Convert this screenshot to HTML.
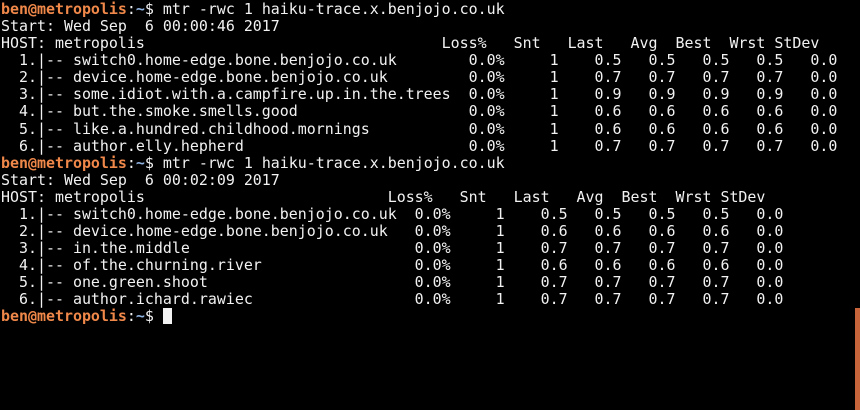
<!DOCTYPE html>
<html><head><meta charset="utf-8"><style>
html,body{margin:0;padding:0;background:#000;width:860px;height:410px;overflow:hidden;position:relative}
pre{margin:0;position:absolute;left:1px;top:1px;font-family:"DejaVu Sans Mono","Liberation Mono",monospace;font-size:14.95px;line-height:17.08px;color:#f2f2f2}
.p{color:#f0884a;font-weight:bold}
.t{color:#8fb3e0;font-weight:bold}
.c{display:inline-block;width:9px;height:16px;background:#f2f2f2;vertical-align:-3px}
.bar{position:absolute;left:855px;top:308px;width:5px;height:102px;background:#c8643a}
</style></head><body>
<pre><span class="p">ben@metropolis</span>:<span class="t">~</span>$ mtr -rwc 1 haiku-trace.x.benjojo.co.uk
Start: Wed Sep  6 00:00:46 2017
HOST: metropolis                                 Loss%   Snt   Last   Avg  Best  Wrst StDev
  1.|-- switch0.home-edge.bone.benjojo.co.uk        0.0%     1    0.5   0.5   0.5   0.5   0.0
  2.|-- device.home-edge.bone.benjojo.co.uk         0.0%     1    0.7   0.7   0.7   0.7   0.0
  3.|-- some.idiot.with.a.campfire.up.in.the.trees  0.0%     1    0.9   0.9   0.9   0.9   0.0
  4.|-- but.the.smoke.smells.good                   0.0%     1    0.6   0.6   0.6   0.6   0.0
  5.|-- like.a.hundred.childhood.mornings           0.0%     1    0.6   0.6   0.6   0.6   0.0
  6.|-- author.elly.hepherd                         0.0%     1    0.7   0.7   0.7   0.7   0.0
<span class="p">ben@metropolis</span>:<span class="t">~</span>$ mtr -rwc 1 haiku-trace.x.benjojo.co.uk
Start: Wed Sep  6 00:02:09 2017
HOST: metropolis                           Loss%   Snt   Last   Avg  Best  Wrst StDev
  1.|-- switch0.home-edge.bone.benjojo.co.uk  0.0%     1    0.5   0.5   0.5   0.5   0.0
  2.|-- device.home-edge.bone.benjojo.co.uk   0.0%     1    0.6   0.6   0.6   0.6   0.0
  3.|-- in.the.middle                         0.0%     1    0.7   0.7   0.7   0.7   0.0
  4.|-- of.the.churning.river                 0.0%     1    0.6   0.6   0.6   0.6   0.0
  5.|-- one.green.shoot                       0.0%     1    0.7   0.7   0.7   0.7   0.0
  6.|-- author.ichard.rawiec                  0.0%     1    0.7   0.7   0.7   0.7   0.0
<span class="p">ben@metropolis</span>:<span class="t">~</span>$ <span class="c"></span></pre>
<div class="bar"></div>
</body></html>
